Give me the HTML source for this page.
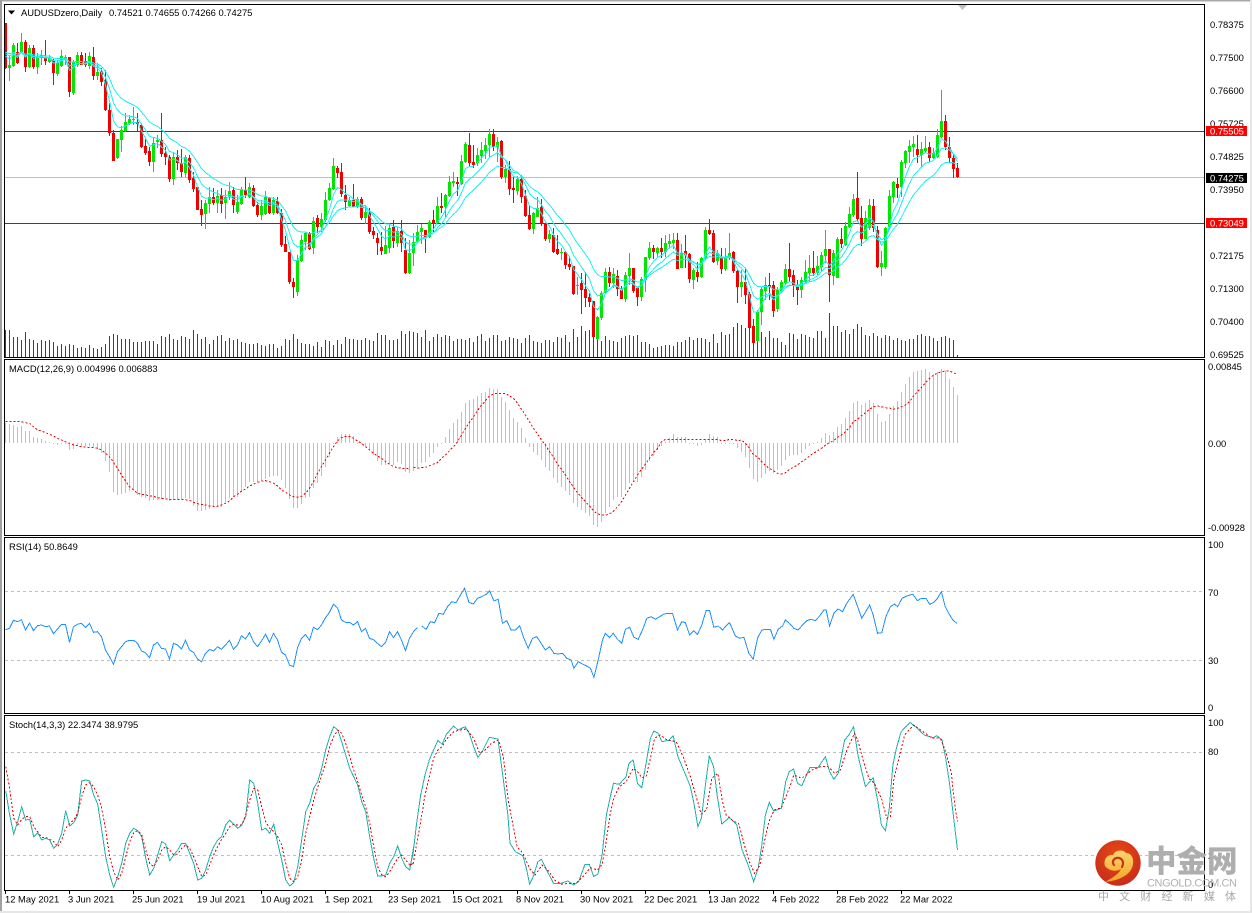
<!DOCTYPE html>
<html><head><meta charset="utf-8"><title>AUDUSDzero,Daily</title>
<style>
html,body{margin:0;padding:0;background:#fff;width:1252px;height:913px;overflow:hidden}
svg{position:absolute;left:0;top:0;display:block}
text{font-family:"Liberation Sans","Noto Sans CJK SC",sans-serif;font-size:9.4px;fill:#000}
</style></head><body>
<svg id="c" width="1252" height="913" viewBox="0 0 1252 913" xmlns="http://www.w3.org/2000/svg">
<rect x="0" y="0" width="1252" height="913" fill="#fff"/>
<rect x="0" y="0" width="1252" height="1.5" fill="#a8a8a8"/>
<rect x="0" y="0" width="2" height="913" fill="#a0a0a0"/>
<rect x="0" y="911" width="1252" height="2" fill="#e6e6e6"/>
<rect x="1250" y="0" width="2" height="913" fill="#e6e6e6"/>
<g id="chart"></g>
<g fill="none" stroke="#000" stroke-width="1" shape-rendering="crispEdges">
<rect x="4.5" y="4.5" width="1200" height="353"/>
<rect x="4.5" y="359.5" width="1200" height="176"/>
<rect x="4.5" y="537.5" width="1200" height="176"/>
<rect x="4.5" y="715.5" width="1200" height="175"/>
</g>
<polygon points="958,5 967,5 962.5,10" fill="#c0c0c0"/>
<polygon points="8,10.5 15,10.5 11.5,14.5" fill="#000"/>
<text x="21" y="16">AUDUSDzero,Daily</text>
<text x="109" y="16">0.74521 0.74655 0.74266 0.74275</text>
<text x="9" y="372">MACD(12,26,9) 0.004996 0.006883</text>
<text x="9" y="550">RSI(14) 50.8649</text>
<text x="9" y="728">Stoch(14,3,3) 22.3474 38.9795</text>
<g>
<text x="1210" y="28">0.78375</text>
<text x="1210" y="61">0.77500</text>
<text x="1210" y="94">0.76600</text>
<text x="1210" y="127">0.75725</text>
<text x="1210" y="160">0.74825</text>
<text x="1210" y="193">0.73950</text>
<text x="1210" y="259">0.72175</text>
<text x="1210" y="292">0.71300</text>
<text x="1210" y="325">0.70400</text>
<text x="1210" y="358">0.69525</text>
<rect x="1206" y="126" width="41" height="10" fill="#f00"/>
<text x="1210" y="134.5" style="fill:#fff">0.75505</text>
<rect x="1206" y="173" width="41" height="10" fill="#000"/>
<text x="1210" y="181.5" style="fill:#fff">0.74275</text>
<rect x="1206" y="218" width="41" height="10" fill="#f00"/>
<text x="1210" y="226.5" style="fill:#fff">0.73049</text>
<text x="1208" y="370">0.00845</text>
<text x="1208" y="447">0.00</text>
<text x="1208" y="531">-0.00928</text>
<text x="1208" y="548">100</text>
<text x="1208" y="596">70</text>
<text x="1208" y="664">30</text>
<text x="1208" y="711">0</text>
<text x="1208" y="726">100</text>
<text x="1208" y="755">80</text>
<text x="1208" y="859">2</text>
<text x="1208" y="888">0</text>
</g>
<g>
<text x="5" y="902.5">12 May 2021</text>
<text x="68" y="902.5">3 Jun 2021</text>
<text x="132" y="902.5">25 Jun 2021</text>
<text x="197" y="902.5">19 Jul 2021</text>
<text x="261" y="902.5">10 Aug 2021</text>
<text x="325" y="902.5">1 Sep 2021</text>
<text x="388" y="902.5">23 Sep 2021</text>
<text x="452" y="902.5">15 Oct 2021</text>
<text x="516" y="902.5">8 Nov 2021</text>
<text x="580" y="902.5">30 Nov 2021</text>
<text x="644" y="902.5">22 Dec 2021</text>
<text x="708" y="902.5">13 Jan 2022</text>
<text x="772" y="902.5">4 Feb 2022</text>
<text x="836" y="902.5">28 Feb 2022</text>
<text x="900" y="902.5">22 Mar 2022</text>
</g>
<g fill="#000" shape-rendering="crispEdges">
<rect x="5" y="891" width="1" height="3"/><rect x="69" y="891" width="1" height="3"/><rect x="133" y="891" width="1" height="3"/><rect x="197" y="891" width="1" height="3"/><rect x="261" y="891" width="1" height="3"/><rect x="325" y="891" width="1" height="3"/><rect x="389" y="891" width="1" height="3"/><rect x="453" y="891" width="1" height="3"/><rect x="517" y="891" width="1" height="3"/><rect x="581" y="891" width="1" height="3"/><rect x="645" y="891" width="1" height="3"/><rect x="709" y="891" width="1" height="3"/><rect x="773" y="891" width="1" height="3"/><rect x="837" y="891" width="1" height="3"/><rect x="901" y="891" width="1" height="3"/>
</g>
<defs>
<radialGradient id="lg" cx="50%" cy="35%" r="70%"><stop offset="0" stop-color="#ea4a12"/><stop offset="1" stop-color="#c42a1c"/></radialGradient>
<linearGradient id="ly" x1="0" y1="0" x2="0" y2="1"><stop offset="0" stop-color="#fbd56e"/><stop offset="1" stop-color="#f5a623"/></linearGradient>
</defs>
<g transform="translate(1118,863)">
<circle r="22.7" fill="url(#lg)"/>
<path d="M-13,3C-15,-4 -10,-9 -5,-8C-3,-13 5,-14 8,-10C13,-10 16,-5 15,1C14,9 6,17 -13,19C-6,15 1,11 3,6C-2,9 -9,8 -13,3Z" fill="url(#ly)"/>
<path d="M-4,2C-7,-2 -3,-6 1,-5C5,-4 6,0 4,4" fill="none" stroke="#c8341a" stroke-width="2.2" stroke-linecap="round"/>
</g>
<text x="1146" y="872" style="font-family:'Noto Sans CJK SC',sans-serif;font-size:30.5px;font-weight:900;fill:#aeaeae">中金网</text>
<text x="1147" y="886.5" textLength="90" style="font-size:11px;fill:#b0b0b0">CNGOLD.COM.CN</text>
<text x="1098" y="900" textLength="138" style="font-family:'Noto Sans CJK SC',sans-serif;font-size:11px;fill:#a8a8a8">中文财经新媒体</text>
</svg>
<script>
var S1="r,68,205,68,208;g,195,205,165,242;g,135,198,130,200;r,155,190,130,192;g,125,155,100,158;r,125,200,120,215;g,145,200,135,205;r,145,200,135,208;g,170,200,160,222;g,165,175,150,195;r,172,182,120,195;g,175,185,165,190;r,180,218,178,255;g,190,222,180,228;g,168,198,150,200;g,170,180,165,195;r,170,276,170,290;g,185,280,180,285;g,165,195,155,200;r,165,195,155,195;r,182,195,158,200;g,168,198,155,208;r,170,228,142,240;g,215,228,190,240;r,215,245,205,258;r,240,330,210,332;r,330,398,310,408;r,398,482,390,482;g,416,475,416,478;g,390,420,378,455;g,365,392,340,395;g,358,372,345,375;g,358,360,322,375;r,365,372,338,395;r,375,442,372,445;r,438,458,415,465;r,452,486,440,498;g,428,485,412,515;g,420,425,405,445;r,420,462,340,472;r,460,472,440,495;r,470,538,465,545;g,472,538,455,555;r,470,490,450,510;r,488,515,448,530;g,472,520,465,530;r,475,540,465,550;r,535,568,515,575;r,560,630,560,630;r,628,645,600,678;g,608,642,600,688;g,592,612,562,640;r,590,610,565,615;g,588,608,570,640;r,585,612,565,640;g,590,610,570,656;g,572,592,545,600;r,570,615,560,640;g,605,635,585,642;g,568,612,560,615;r,570,585,530,595;g,562,592,550,595;r,565,618,555,620;r,615,645,605,650;g,618,645,600,660;g,592,642,572,645;r,595,640,590,642;g,600,640,590,645;r,603,640,590,642;r,640,735,628,740;r,732,755,708,757;r,755,847,755,852;r,847,860,835,893;g,780,875,765,888;g,720,783,705,785;g,698,725,695,750;r,698,748,695,750;g,663,745,650,762;r,655,680,645,700;g,658,680,640,695;g,600,660,575,665;g,565,600,550,603;g,498,568,475,570;r,503,518,498,535;r,517,582,488,590;r,585,605,555,630;g,600,618,590,620;r,600,620,552,622;g,598,620,590,625;r,597,655,590,660;g,635,655,615,672;r,640,695,625,703;r,692,705,680,717;r,713,728,700,765;r,740,752,695,765;g,735,762,678,762;g,685,745,670,760;r,680,722,660,745;g,693,730,680,740;r,693,730,660,755;r,750,820,715,822;g,758,820,720,822;g,727,758,700,798;g,697,725,675,728";
var S2="g,385,395,372,432;r,390,410,390,458;g,367,412,360,415;r,360,372,330,395;g,318,368,292,370;r,318,325,280,340;g,285,322,282,350;g,246,288,228,292;g,243,248,215,262;r,246,252,232,288;g,183,252,165,255;g,132,185,126,188;r,135,188,98,198;r,186,196,135,204;g,165,190,145,198;g,150,168,125,190;g,135,152,115,178;g,102,135,88,172;r,102,140,88,152;g,125,140,110,185;r,123,232,120,238;g,208,232,195,250;r,208,266,182,285;r,264,270,230,308;g,236,272,228,285;r,238,290,225,308;r,288,348,270,350;r,345,387,318,390;g,340,387,335,402;g,325,350,292,352;r,320,372,298,378;r,370,417,370,422;g,403,417,390,430;r,405,457,385,460;r,447,462,405,465;g,456,458,445,480;r,456,496,455,508;r,492,500,470,510;r,498,582,498,585;g,555,557,530,585;r,548,570,518,642;r,567,594,515,622;r,590,606,580,620;r,603,712,603,712;g,650,717,648,720;g,578,655,572,660;g,515,578,505,580;r,515,550,502,562;g,522,550,505,565;r,528,568,510,588;r,568,598,558,598;g,525,598,515,605;g,505,528,460,555;r,505,573,505,578;r,565,592,565,618;g,538,592,532,602;g,472,540,470,575;g,445,475,425,480;r,445,455,435,478;g,445,460,440,470;r,445,455,415,475;g,430,455,405,472;g,423,432,402,445;g,420,428,400,448;r,420,507,400,507;g,458,505,432,505;r,453,465,405,505;r,462,537,460,550;g,510,540,505,568;r,515,532,485,545;g,473,530,470,535;g,390,475,382,478;r,390,402,358,405;r,398,485,390,490;g,458,482,450,495;r,475,508,445,522;g,470,508,445,512;g,458,475,400,480;r,456,514,452,520;r,514,561,510,608;g,545,562,510,590;r,545,585,508,612;r,583,684,575,684;r,678,728,658,730;g,635,722,630,725;g,567,635,562,675;g,555,572,530,600;r,555,562,518,600;r,555,632,542,652;g,570,627,560,635;g,545,572,540,580;g,507,550,492,555;r,507,530,430,545;r,525,558,510,590;r,562,570,540,614;g,540,570,530,595;g,517,545,480,550;g,503,520,465,545;r,503,520,452,528;g,498,520,468,525;g,465,500,455,515;g,447,467,390,490;r,447,525,447,605;g,460,528,450,555;g,417,533,410,535";
var S3="r,717,732,685,745;g,678,735,665,738;g,642,680,620,685;g,598,645,582,650;r,595,658,516,665;r,655,717,618,738;g,655,717,632,718;g,615,685,598,690;r,618,685,598,695;r,690,800,678,803;g,790,802,752,828;g,685,800,680,808;g,588,680,570,690;g,546,590,542,608;r,552,565,535,595;g,487,562,480,590;g,453,490,450,505;g,437,455,420,490;g,432,440,408,470;r,447,465,405,490;g,447,465,425,500;g,445,452,408,458;r,440,473,425,485;g,460,473,445,478;g,405,470,388,475;g,363,410,270,415;r,363,440,345,450;r,440,475,412,490;r,474,507,465,533;r,505,532,490,533";
var CS=[];
function add(s,o){s.split(';').forEach(function(t){var a=t.split(',');CS.push([a[0],+a[1]+o,+a[2]+o,+a[3]+o,+a[4]+o]);});}
add(S1,0);add(S2,300);add(S3,0);
var V1=[330,330,350,350,360,336,357,360,370,360,362,360,366,378,372,378,372,375,384,380,384,375,384,387,380,372,348,342,345,357,357,357,366,366,366,363,363,363,372,348,352,342,358,360,348,352,357,330,342,357,352,372,360,348,345,362,354,360,357,366,370,372,372,370,375,378,372,372,385,378,357,360,342,357,370,372,372,378,366,381,360,362,375,360,372,352,357,357,360,360,355,360,362,340,345,345,360,360,357,333,342,333,336,340];
var V2=[712,690,722,712,702,712,705,708,722,717,717,720,715,725,708,702,722,715,705,705,722,720,712,715,718,728,715,705,722,725,728,720,720,725,712,715,705,725,688,712,678,692,690,680,692,722,708,720,722,725,715,708,705,708,705,725,725,733,745,742,738,735,735,738,725,725,720,710,720,715,715,718,725,702,728,697,705,702,680,670,675,685,658,678,722,695,712,692,715,715,725,735,700,702,718,702,705,712,715,692,692,715,640];
var V3=[978,978,995,990,1002,988,972,982,1005,1008,1000,1008,1014,1005,1008,1020,1015,1020,1022,1018,1018,1006,1002,1008,1008,1015,1022,1012,1008,1015,1020,1066];
var Hp=[205,208,210,215,212,228,228,245,248,252,258,262,265,270,266,267,285,282,270,272,272,272,275,283,295,318,350,410,420,418,415,408,408,420,425,430,438,435,435,432,430,438,435,435,432,430,432,452,468,468,465,462,452,455,455,442,428,425,425,410,395,380,382,382,375,372,365,362,362,375,398,432,458,458,448,430,425,400,385,362,335,305,265,245,238,236,238,242,268,268,272,285,300,318,330,330,328,330,320,328,352,355];
var H9=[332,320,308,305,290,278,260,252,230,207,188,177,155,128,120,117,108,100,96,84,86,88,110,125,150,174,186,204,234,260,275,284,300,320,332,353,368,380,392,405,428,440,450,458,468,495,500,485,458,440,420,410,410,390,368,366,365,352,330,302,288,270,258,245,234,222,232];
var H10=[232,232,252,250,258,255,238,222,228,232,252,252,252,250,264,276,291,323,357,365,353,342,333,338,330,318,300,288,285,285,278,268,258,250,246,234,219,225,216,201,192,174,153,129,123,135,129,120,129,162,186,183,162,138,123,96,72,51,36,33,30,27,36,42,36,27,33,57,81,105];
var Sg5=[200,200,200,200,200,203,205,215,225,228,233,238,243,250,255,260,265,270,272,275,276,278,278,280,285,295,305,322,340,360,378,395,405,415,418,420,422,424,428,430,432,433,433,434,434,434,436,442,446,448,450,453,454,454,450,445,438,425,418,408,402,393,388,382,378,377,380,385,393,405,412,420,425,427,424,415,400,380,355,335,315,295,275,258,248,244,244,250,258,265,275,285,295,303,310,320,328,335,338,340,340,342];
var Sg9=[322,325,322,322,317,312,308,295,285,272,260,245,225,205,187,170,152,135,122,108,102,100,100,100,108,115,130,148,165,185,205,222,240,255,275,292,312,328,345,365,382,398,412,425,438,452,462,464,466,462,453,440,425,405,385,365,345,328,312,295,278,265,245,238,238,238,238,238,238,238,238,238,238,238,238,238,238,242,242,238,238,242,240,250,265,285,290,305,317,325,332,340,342,338,328,322,315,305,298,288,280,272,265,255,248,242,232,225,215,203,185,178,167,158,148,140,138,140,143,144,148,145,140,135,125,108,95,82,68,55,45,40,35,33,33,38,44];
var R11=[284,280,256,260,254,285,264,287,272,270,275,273,296,282,268,268,322,275,268,265,277,265,292,290,305,345,365,388,350,335,320,316,316,325,348,353,368,330,322,340,342,372,325,330,342,316,345,352,372,380,355,343,348,335,343,330,316,343,330,302,312,293,320,335,318,298,322,295,315,352,360,390,395,338,310,298,316,277,284,270,248,232,208,218,255,262,262,270,260,290,280,310,314,325,335,323,290,308,290,315,347,310,290,278];
var R8=[5,288,17,298,29,275,41,278,53,250,65,253,77,230,89,215,101,218,113,195,125,175,137,217,149,222,161,205,173,200,185,193,195,182,207,213,219,208,231,280,243,272,255,300,267,300,279,287,291,325,303,355,315,325,327,320,339,340,351,360,363,350,375,370,387,372,399,370,411,385,423,390,431,415,443,395,455,402,467,408,477,415,487,442,499,390,511,330,519,310,531,323,541,310,553,328,565,340,575,298,587,292,599,322,611,328,623,300,635,265,647,260,659,268,671,260,683,252,695,250,707,250,721,300,733,275,743,278,755,315,767,302,777,313,789,285,801,242,811,242,823,292,835,288,847,300,859,285,867,278,883,318,895,325,907,322,921,370,933,388,945,325,957,300,969,298,981,298,991,328,1003,298,1015,288,1023,270,1035,280,1047,295,1059,300,1071,285,1083,272,1095,268,1107,272,1119,258,1131,240,1137,240,1147,288,1159,250,1171,237,1183,245,1195,220,1213,193,1237,265,1259,225,1269,255,1281,310,1293,308,1305,258,1317,230,1329,222,1337,230,1350,205,1365,197,1380,193,1393,212,1403,205,1417,205,1427,223,1437,218,1449,205,1460,185,1470,228,1480,250,1492,270,1503,280];
var M6=[17,272,29,345,41,402,53,365,65,320,77,360,89,358,101,410,113,398,125,420,137,415,149,420,161,445,173,432,185,400,197,332,209,378,221,368,233,345,245,243,257,240,269,243,281,285,293,312,305,390,317,470,329,525,341,562,353,530,365,490,377,430,389,400,401,385,413,392,425,410,437,475,449,525,461,505,473,465,485,425,497,432,509,482,521,465,533,450,545,430,557,430,569,460,581,490,593,540,605,535,617,510,629,470,641,440,653,420,665,410,677,375,689,360,701,372,713,385,725,375,737,350,749,240,761,250,773,310,785,390,797,385,809,400,821,372,833,430,845,480,857,540,869,558,881,548,893,500,905,420,917,335,929,310,941,265,953,245,965,205,977,150,989,110,1001,80,1013,90,1025,125,1037,165,1049,205,1061,230,1073,255,1085,305,1097,335,1109,410,1121,475,1133,528,1145,528,1157,525,1169,490,1181,470,1193,438,1205,475,1217,500,1229,510,1241,440];
var G6=[17,200,29,265,41,355,53,375,65,358,77,350,89,350,101,380,113,395,125,412,137,412,149,418,161,425,173,440,185,420,197,385,209,370,221,360,233,340,245,290,257,255,269,248,281,260,293,285,305,325,317,390,329,470,341,515,353,540,365,520,377,470,389,425,401,398,413,392,425,405,437,450,449,490,461,500,473,480,485,450,497,440,509,450,521,465,533,462,545,445,557,435,569,445,581,470,593,500,605,530,617,525,629,495,641,465,653,440,665,418,677,400,689,380,701,373,713,375,725,375,737,345,749,300,761,265,773,270,785,320,797,365,809,385,821,395,833,410,845,435,857,490,869,535,881,545,893,530,905,480,917,400,929,350,941,300,953,262,965,225,977,190,989,140,1001,110,1013,90,1025,100,1037,130,1049,170,1061,210,1073,245,1085,285,1097,320,1109,370,1121,440,1133,500,1145,525,1157,530,1169,515,1181,495,1193,475,1205,465,1217,480,1229,495,1241,490];
var M12=[0,455,8,420,18,330,30,240,42,180,54,135,66,105,78,76,90,88,102,58,122,33,134,45,154,35,166,55,178,95,190,127,202,110,222,67,246,72,262,200,274,300,280,385,295,410,316,422,326,460,335,508,345,485,358,440,368,433,385,470,402,505,422,505,442,498,458,510,472,500,490,448,502,448,514,484,526,478,538,420,550,300,562,240,570,205,586,208,605,185,613,145,625,135,637,205,649,218,661,145,673,70,683,48,695,55,705,80,725,76,737,62,750,125,770,175,785,215,795,265,806,335,816,310,826,220,838,122,850,155,860,240,873,327,895,307,915,330,930,405,945,445,962,500,975,460,985,390,995,300,1006,262,1018,288,1040,280,1052,200,1062,170,1074,162,1085,205,1097,212,1120,157,1143,157,1163,125,1175,170,1187,193,1199,175,1217,75,1229,60,1242,35,1254,120,1275,215,1297,188,1310,260,1320,330,1331,347,1342,280,1352,150,1362,100,1375,50,1400,22,1415,35,1440,60,1465,68,1475,62,1490,75,1500,130,1510,200,1520,290,1533,405];
var G12=[0,448,8,450,20,380,30,320,42,240,54,185,66,130,78,105,90,95,102,72,122,50,140,45,158,42,178,70,195,115,210,105,228,85,248,75,262,130,274,250,290,340,300,395,316,415,335,460,350,480,370,450,390,470,405,495,425,508,445,505,465,505,480,490,505,458,525,465,538,450,548,390,560,300,570,250,586,215,605,200,625,160,637,170,649,188,661,185,673,130,685,70,700,60,720,75,745,80,765,125,785,185,800,240,815,297,830,285,845,190,862,175,875,260,885,300,905,318,920,325,935,385,950,440,965,475,980,450,992,380,1005,320,1020,285,1040,278,1060,225,1075,180,1097,190,1125,165,1150,155,1170,155,1190,175,1205,165,1225,100,1245,55,1255,80,1270,140,1285,190,1300,205,1320,250,1335,310,1345,305,1355,190,1370,125,1385,60,1410,30,1430,45,1460,68,1485,70,1500,110,1515,170,1525,265,1533,320];
var h='';
function R(x,y,w,ht,f){if(ht<1)ht=1;h+='<rect x="'+x+'" y="'+y+'" width="'+w+'" height="'+ht+'" fill="'+f+'"/>';}
function X(i){return 5+4*i;}
function P(a,c,dash,w){h+='<polyline fill="none" stroke="'+c+'" stroke-width="'+(w||1)+'"'+(dash?' stroke-dasharray="'+dash+'"':'')+' points="'+a.join(' ')+'"/>';}
function flat(l,dx,dy,sx){sx=sx||3;var o=[];for(var i=0;i<l.length;i+=2)o.push((dx+l[i]/sx).toFixed(1)+','+(dy+l[i+1]/3).toFixed(1));return o;}
function series(l,st,off){var o=[];l.forEach(function(v,k){o.push((X(st+k)+.5)+','+(off+v/3).toFixed(1));});return o;}
h+='<g shape-rendering="crispEdges">';
[591,660,752,855].forEach(function(y){h+='<line x1="5" x2="1204" y1="'+(y+.5)+'" y2="'+(y+.5)+'" stroke="#c0c0c0" stroke-dasharray="3 3"/>';});
function vol(l,st,off){l.forEach(function(v,k){var y=Math.round(off+v/3);R(X(st+k),y,1,357-y,'#0c660c');});}
vol(V1,0,220);vol(V2,104,100);vol(V3,207,0);
R(5,131,1199,1,'#d80000');R(5,223,1199,1,'#d80000');R(5,177,1199,1,'#c0c0c0');
CS.forEach(function(c,i){var col=c[0]=='g'?'#00e600':'#f00000',x=X(i),
 t=Math.round(c[1]/3),b=Math.round(c[2]/3),hi=Math.round(c[3]/3),lo=Math.round(c[4]/3);
 R(x,hi,1,lo-hi,col);R(x-1,t,3,b-t,col);});
function ema(n,seed){var k=2/(n+1),v=seed,o=[];CS.forEach(function(c,i){var cl=c[0]=='g'?c[1]:c[2];v=v+k*(cl-v);o.push((X(i)+.5)+','+(v/3).toFixed(1));});return o;}
P(ema(5,150),'#19f0f0');P(ema(9,150),'#19f0f0');P(ema(16,150),'#19f0f0');
function hist(l,st,dy,base){l.forEach(function(v,k){var y=dy+v/3,a=Math.min(y,base),b=Math.max(y,base);R(X(st+k),Math.round(a),1,Math.round(b-a),'#c0c0c0');});}
hist(Hp,0,355,443);hist(H9,102,360,443);hist(H10,169,360,443);
P(series(Sg5,0,355),'#f00000','2 2');P(series(Sg9,102,360),'#f00000','2 2');
P(series(R11,0,535),'#1e90ff');P(flat(R8,420,530,2.8),'#1e90ff');
P(flat(M6,0,700),'#20b2aa');P(flat(M12,410,715,2.8),'#20b2aa');
P(flat(G6,0,700),'#f00000','2 2');P(flat(G12,410,715,2.8),'#f00000','2 2');
h+='</g>';
document.getElementById('chart').innerHTML=h;
</script>
</body></html>
